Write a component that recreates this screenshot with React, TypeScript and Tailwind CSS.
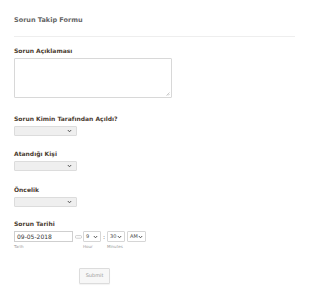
import React from "react";

function Chevron() {
  return (
    <svg width="5" height="4" viewBox="0 0 5 4" className="shrink-0">
      <path d="M0.8 1 L2.5 2.8 L4.2 1" fill="none" stroke="#444" strokeWidth="0.9" />
    </svg>
  );
}

function Dropdown() {
  return (
    <div className="mt-[3px] flex h-[10px] w-[63px] items-center justify-end rounded-[1px] border border-[#dcdcdc] bg-[#efefef] pr-[4px]">
      <Chevron />
    </div>
  );
}

function MiniSelect({ value, w }: { value: string; w: string }) {
  return (
    <div
      className={`flex h-[11px] ${w} items-center justify-between rounded-[1px] border border-[#d6d6d6] bg-white px-[2px] text-[5px] text-[#444]`}
    >
      <span>{value}</span>
      <Chevron />
    </div>
  );
}

function Label({ children, mt }: { children: React.ReactNode; mt: string }) {
  return (
    <div className={`${mt} text-[6px] font-bold leading-[8px] text-[#4a3c30]`}>
      {children}
    </div>
  );
}

export default function App() {
  return (
    <div className="h-[298px] w-[310px] bg-white px-[14px] pt-[15px] font-['DejaVu_Sans',Verdana,sans-serif]">
      <h1 className="text-[6.5px] font-bold leading-[10px] text-[#666]">
        Sorun Takip Formu
      </h1>
      <div className="mt-[11px] h-px w-[281px] bg-[#eeeeee]" />

      <Label mt="mt-[10px]">Sorun Açıklaması</Label>
      <div className="relative mt-[3px] h-[40px] w-[158px] rounded-[1px] border border-[#d8d8d8] bg-white">
        <svg width="4" height="4" viewBox="0 0 4 4" className="absolute bottom-[1px] right-[1px]">
          <path d="M0.5 3.5 L3.5 0.5 M2 3.5 L3.5 2" stroke="#aaa" strokeWidth="0.6" />
        </svg>
      </div>

      <Label mt="mt-[17px]">Sorun Kimin Tarafından Açıldı?</Label>
      <Dropdown />

      <Label mt="mt-[14px]">Atandığı Kişi</Label>
      <Dropdown />

      <Label mt="mt-[15px]">Öncelik</Label>
      <Dropdown />

      <Label mt="mt-[13px]">Sorun Tarihi</Label>
      <div className="mt-[3px] flex items-start">
        <div className="flex flex-col">
          <div className="flex h-[11px] w-[59px] items-center border border-[#cfcfcf] bg-white px-[2px] text-[6px] text-[#333]">
            09-05-2018
          </div>
          <span className="mt-[2px] text-[4px] leading-[5px] text-[#999]">Tarih</span>
        </div>
        <div className="ml-[2px] flex h-[11px] items-center">
          <svg width="7" height="4" viewBox="0 0 7 4">
            <rect x="0.4" y="0.6" width="6.2" height="2.6" rx="1" fill="none" stroke="#bbb" strokeWidth="0.7" />
          </svg>
        </div>
        <div className="ml-[1px] flex flex-col">
          <MiniSelect value="9" w="w-[18px]" />
          <span className="mt-[2px] text-[4px] leading-[5px] text-[#999]">Hour</span>
        </div>
        <div className="flex h-[11px] w-[6px] items-center justify-center text-[6px] text-[#555]">
          :
        </div>
        <div className="flex flex-col">
          <MiniSelect value="30" w="w-[18px]" />
          <span className="mt-[2px] text-[4px] leading-[5px] text-[#999]">Minutes</span>
        </div>
        <div className="ml-[2px] flex flex-col">
          <MiniSelect value="AM" w="w-[19px]" />
        </div>
      </div>

      <div className="mt-[11px] pl-[65px]">
        <button className="h-[16px] w-[31px] rounded-[1px] border border-[#dcdcdc] bg-[#f7f7f7] text-[5px] text-[#999] shadow-[0_1px_1px_rgba(0,0,0,0.05)]">
          Submit
        </button>
      </div>
    </div>
  );
}
